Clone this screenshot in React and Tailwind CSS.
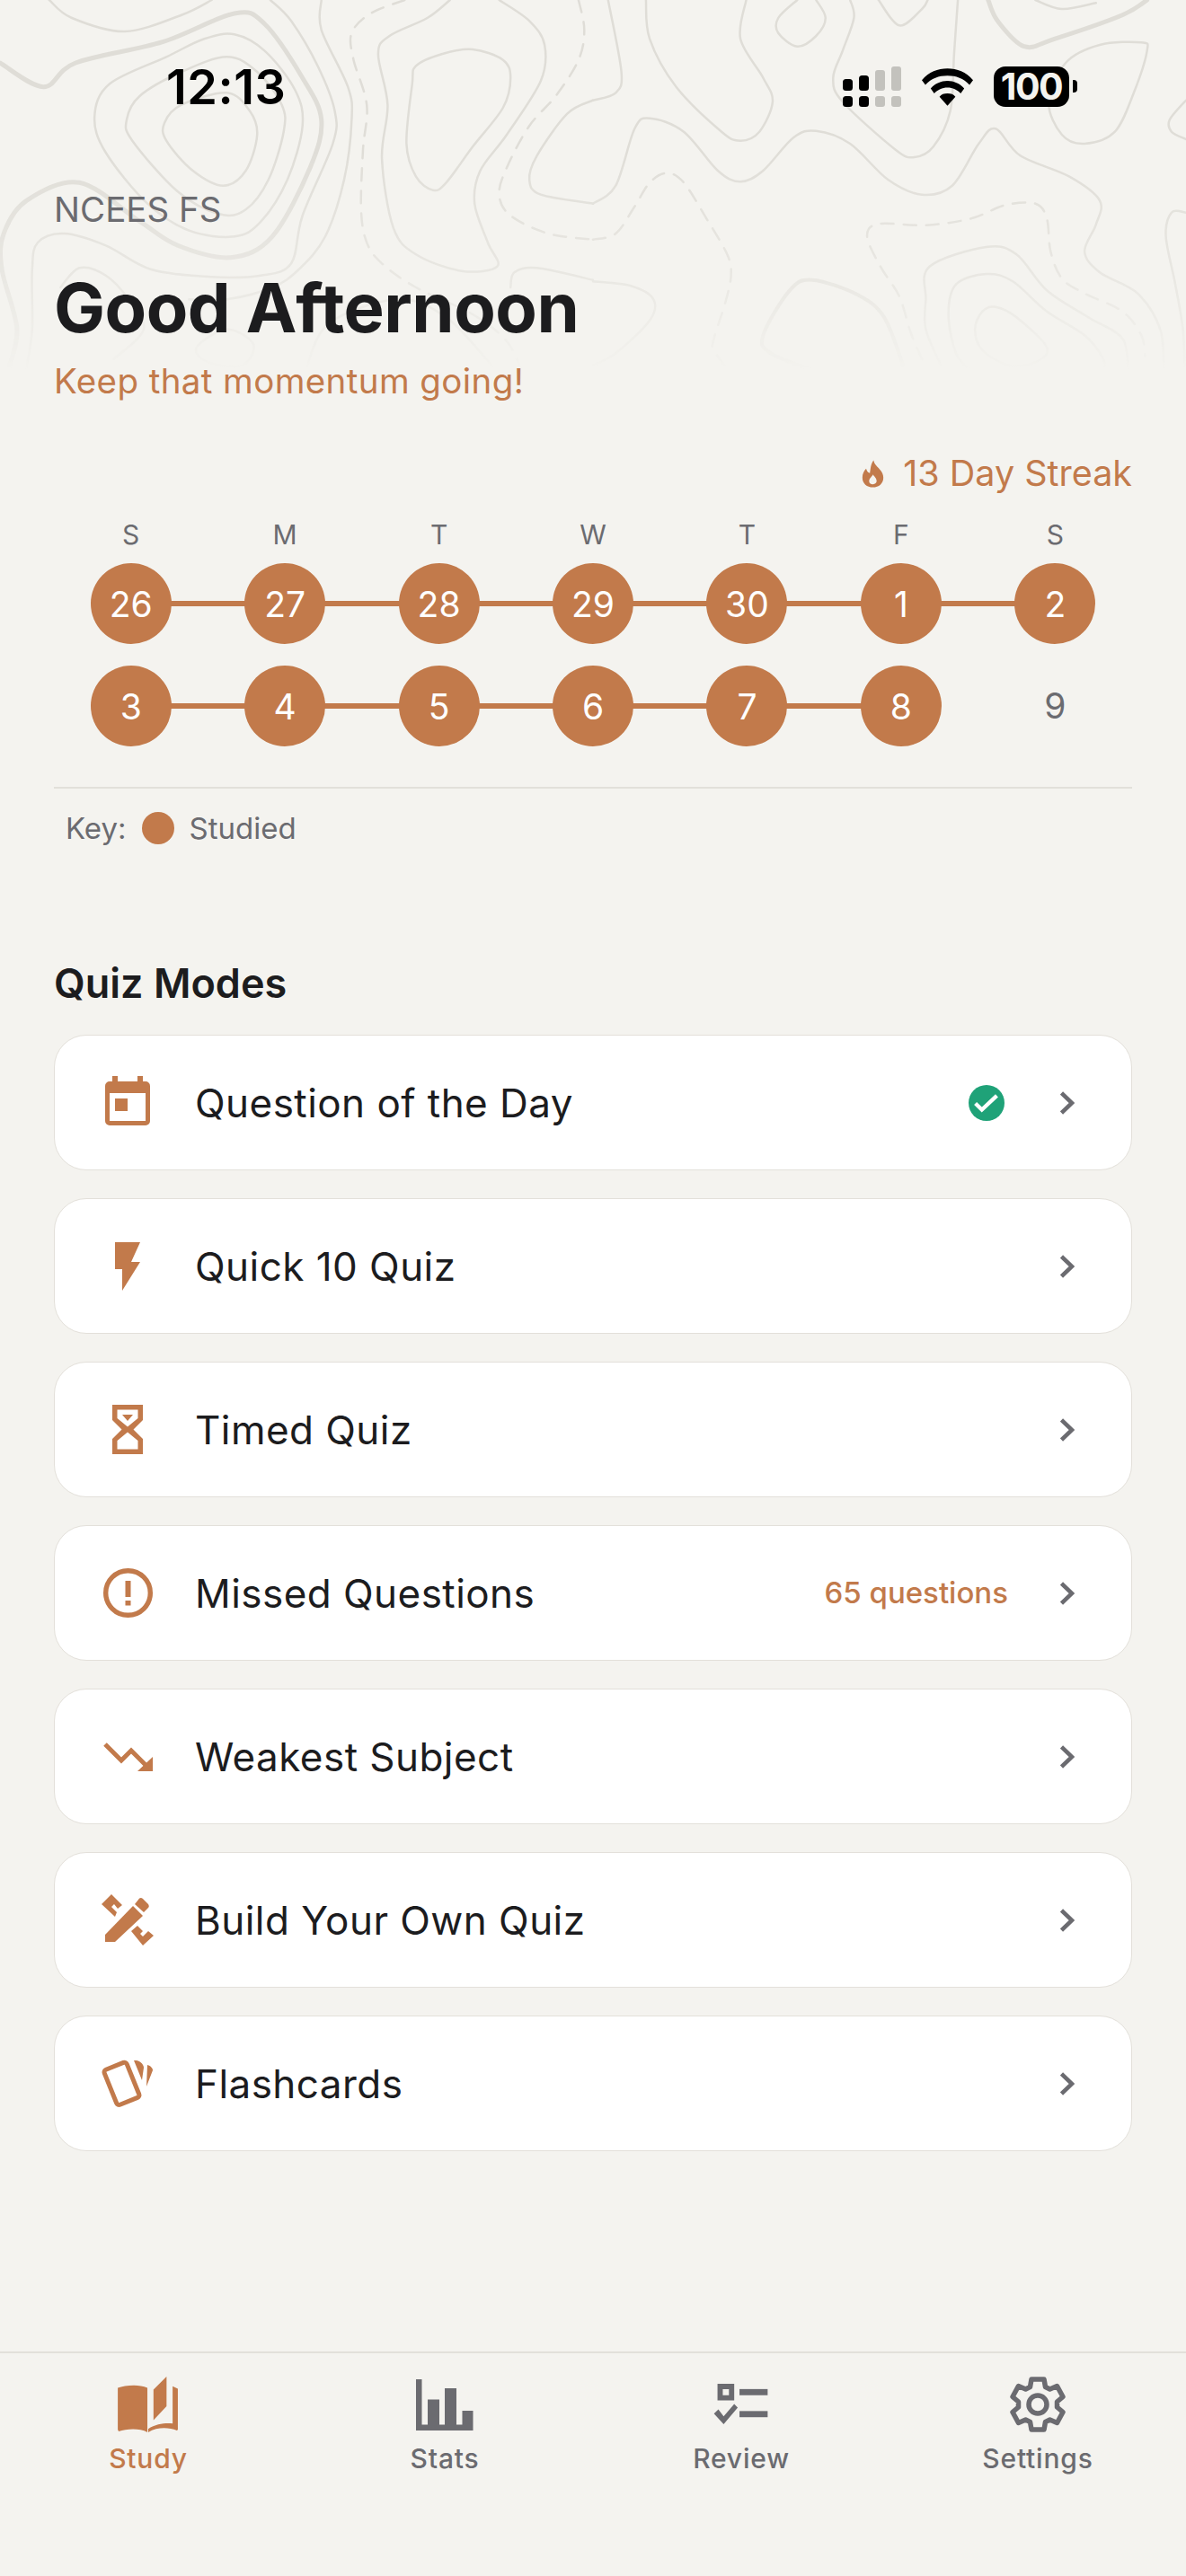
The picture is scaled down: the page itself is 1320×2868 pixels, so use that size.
const ACCENT = "#c27a4b";

function smooth(pts, closed) {
  const n = pts.length;
  const p = (i) => (closed ? pts[(i + n) % n] : pts[Math.max(0, Math.min(n - 1, i))]);
  let d = `M${pts[0][0].toFixed(1)} ${pts[0][1].toFixed(1)}`;
  const end = closed ? n : n - 1;
  for (let i = 0; i < end; i++) {
    const [a, b, c, e] = [p(i - 1), p(i), p(i + 1), p(i + 2)];
    const c1 = [b[0] + (c[0] - a[0]) / 6, b[1] + (c[1] - a[1]) / 6];
    const c2 = [c[0] - (e[0] - b[0]) / 6, c[1] - (e[1] - b[1]) / 6];
    d += `C${c1[0].toFixed(1)} ${c1[1].toFixed(1)} ${c2[0].toFixed(1)} ${c2[1].toFixed(1)} ${c[0].toFixed(1)} ${c[1].toFixed(1)}`;
  }
  return d;
}
const L = (a) => a.map(([x, y]) => [x / 2.376, y / 3]);
const R = (a) => a.map(([x, y]) => [660 + x / 2.376, y / 3]);

const CONTOURS = [
  { p: L([[130,0],[190,60],[330,105],[480,50],[560,0]]) },
  { p: L([[0,210],[115,290],[200,210],[430,140],[620,45],[700,80],[800,260],[850,400],[820,560],[720,790],[610,860],[470,820],[370,740],[210,610],[70,670],[10,780],[5,900],[45,1100],[20,1240]]), w: 5 },
  { p: L([[715,0],[770,70],[840,220],[885,370],[880,480],[800,720],[770,880],[690,920],[560,925],[400,900],[280,820],[170,780],[100,810],[85,900],[85,1100],[70,1230]]) },
  { p: L([[850,0],[850,100],[920,290],[930,400],[910,600],[860,790],[790,900],[720,960],[600,1000],[500,1000]]) },
  { c: 1, p: L([[620,115],[700,170],[780,300],[800,420],[760,600],[690,740],[620,790],[500,770],[390,680],[280,510],[250,390],[290,280],[440,190],[540,130]]) },
  { c: 1, p: L([[600,190],[680,240],[745,350],[750,440],[710,600],[650,700],[580,715],[470,640],[350,470],[335,400],[370,320],[480,240]]) },
  { c: 1, p: L([[600,310],[660,370],[680,450],[650,570],[590,620],[510,570],[440,470],[435,410],[480,350]]) },
  { p: L([[160,960],[210,895],[280,920],[340,1000],[380,1100],[300,1200]]) },
  { c: 1, p: L([[600,1100],[670,1150],[640,1220],[550,1210],[520,1160]]) },
  { p: L([[810,1230],[870,1080],[1050,1000],[1180,1060],[1300,1220]]) },
  { d: 1, p: L([[1070,0],[980,45],[930,110],[935,200],[970,350],[960,500],[955,700],[970,810],[1010,880],[1100,960],[1250,1050],[1340,1140],[1380,1240]]) },
  { p: L([[1190,0],[1130,60],[1030,120],[1000,180],[1025,350],[1010,530],[1040,760],[1100,850],[1220,905],[1315,890],[1290,810],[1255,680],[1270,570],[1340,450],[1430,270],[1440,150],[1400,70],[1320,0]]) },
  { c: 1, p: L([[1250,165],[1330,200],[1350,260],[1330,360],[1250,490],[1180,610],[1145,635],[1100,590],[1075,480],[1090,280],[1100,220],[1170,180]]) },
  { d: 1, p: L([[1530,0],[1545,100],[1530,200],[1470,320],[1400,420],[1340,560],[1320,650],[1350,720],[1450,780],[1568,800]]) },
  { p: L([[1568,335],[1500,380],[1420,520],[1400,600],[1430,650],[1568,680]]) },
  { p: L([[1350,960],[1360,910],[1420,895],[1568,935]]) },
  { d: 1, p: R([[0,800],[60,780],[110,690],[150,610],[195,578],[240,610],[300,730],[355,850],[365,920],[350,1010],[320,1130],[320,1170],[360,1240]]) },
  { p: R([[40,0],[75,240],[60,310],[0,335]]) },
  { p: R([[140,0],[150,130],[220,290],[340,440],[390,470],[440,440],[475,340],[450,260],[390,130],[405,0]]) },
  { p: R([[540,0],[490,60],[490,110],[540,155],[590,120],[615,60],[590,0]]) },
  { p: R([[680,0],[690,60],[660,170],[635,260],[660,340],[800,500],[850,525],[900,490],[945,370],[955,180],[965,0]]) },
  { p: R([[755,0],[810,85],[870,30],[885,0]]) },
  { p: R([[1045,0],[1070,70],[1140,155],[1220,130],[1400,50],[1465,0]]), w: 5 },
  { p: R([[1170,0],[1240,30],[1330,10]]) },
  { c: 1, p: R([[1450,142],[1340,150],[1250,210],[1205,340],[1240,450],[1300,480],[1380,440],[1430,310],[1465,170]]) },
  { p: R([[1568,335],[1525,400],[1530,440],[1568,465]]) },
  { p: R([[0,680],[60,620],[110,430],[150,395],[240,440],[330,570],[390,607],[450,570],[530,460],[590,437],[680,480],[780,600],[870,650],[950,620],[1020,480],[1065,430],[1130,520],[1260,590],[1340,670],[1330,750],[1300,840],[1340,910],[1440,980],[1500,1100],[1510,1240]]) },
  { d: 1, p: R([[870,1200],[840,1110],[810,990],[760,890],[725,790],[755,748],[880,752],[1000,730],[1090,685],[1170,680],[1200,730],[1210,840],[1240,930],[1300,980],[1400,1040],[1450,1120],[1460,1190]]) },
  { p: R([[920,1220],[880,1100],[880,1000],[890,890],[1040,825],[1120,850],[1200,970],[1310,1060],[1400,1130],[1415,1240]]) },
  { p: R([[1000,1240],[960,1180],[940,1050],[960,950],[1040,915],[1110,940],[1200,1040],[1300,1120],[1350,1200],[1350,1240]]) },
  { c: 1, p: R([[1065,1025],[1120,1060],[1200,1160],[1170,1210],[1100,1220],[1030,1170],[1010,1100],[1030,1040]]) },
  { p: R([[590,1240],[470,1180],[450,1120],[520,970],[580,935],[700,985],[770,1060],[820,1220]]), w: 4 },
  { p: R([[0,940],[100,955],[160,1000],[150,1070],[60,1180],[0,1220]]) },
  { p: R([[1568,710],[1530,710],[1515,790],[1540,950],[1560,1100],[1565,1240]]) },
];

function Topo() {
  return (
    <svg className="absolute left-0 top-0 w-[1320px] h-[420px]" viewBox="0 0 1320 420" fill="none">
      <defs>
        <linearGradient id="fade" x1="0" y1="0" x2="0" y2="1">
          <stop offset="0" stopColor="#fff" />
          <stop offset="0.4" stopColor="#fff" />
          <stop offset="0.72" stopColor="#fff" stopOpacity="0.55" />
          <stop offset="0.98" stopColor="#fff" stopOpacity="0" />
        </linearGradient>
        <mask id="topomask">
          <rect width="1320" height="420" fill="url(#fade)" />
        </mask>
      </defs>
      <g mask="url(#topomask)" stroke="#dfddd7" strokeLinecap="round">
        {CONTOURS.map((c, i) => (
          <path
            key={i}
            d={smooth(c.p, c.c) + (c.c ? "Z" : "")}
            strokeWidth={c.w || 2.5}
            strokeDasharray={c.d ? "14 11" : undefined}
          />
        ))}
      </g>
    </svg>
  );
}

function StatusBar() {
  return (
    <div className="relative flex items-center justify-between h-[45px] pl-[185px] pr-[130px] mt-[74px]">
      <span className="text-[54px] leading-[45px] font-semibold text-black tracking-[0.5px]">12:13</span>
      <div className="flex items-center">
        <svg width="65" height="45" viewBox="0 0 65 45" className="mr-[23px]">
          <g fill="#000">
            <rect x="0" y="14" width="11" height="13" rx="3.500" />
            <rect x="18" y="10" width="11" height="17" rx="3.500" />
            <rect x="0" y="33" width="11" height="12" rx="3.500" />
            <rect x="18" y="33" width="11" height="12" rx="3.500" />
          </g>
          <g fill="#c3c2bd">
            <rect x="36" y="4" width="11" height="23" rx="3" />
            <rect x="54" y="0" width="11" height="27" rx="3" />
            <rect x="36" y="33" width="11" height="12" rx="3" />
            <rect x="54" y="33" width="11" height="12" rx="3" />
          </g>
        </svg>
        <svg width="57" height="42" viewBox="0 0 58 42" className="mr-[23px]">
          <path fill="#000" d="M29 0C18 0 8 4 0 13l4 5.500C11 11 19 8 29 8s18 3 25 10.500l4-5.500C50 4 40 0 29 0Z" />
          <path fill="#000" d="M29 14c-7 0-14 3-19 8.500l4 5.500c4-4 9-6.500 15-6.500S40 24 44 28l4-5.500C43 17 36 14 29 14Z" />
          <path fill="#000" d="M29 28c-4 0-7 1-9 4l9 10 9-10c-2-3-5-4-9-4Z" />
        </svg>
        <div className="relative flex items-center justify-center w-[84px] h-[45px] rounded-[13px] bg-black">
          <span className="text-[41px] leading-[45px] font-bold text-[#f4f3ef] tracking-[-1.5px]">100</span>
          <span className="absolute right-[-9px] top-[15px] w-[5px] h-[14px] rounded-r-[4px] bg-black" />
        </div>
      </div>
    </div>
  );
}

const ROW1 = ["26", "27", "28", "29", "30", "1", "2"];
const ROW2 = ["3", "4", "5", "6", "7", "8"];
const DAYS = ["S", "M", "T", "W", "T", "F", "S"];

function DayRow({ days, className }) {
  return (
    <div className={"grid grid-cols-7 " + className}>
      {days.map((d, i) => (
        <div key={i} className="relative flex justify-center">
          {i < days.length - 1 && (
            <span className="absolute left-[50%] w-full top-[42px] h-[6px] bg-[#c27a4b]" />
          )}
          <span className="relative flex items-center justify-center w-[90px] h-[90px] rounded-full bg-[#c27a4b] text-white text-[39px] leading-none font-normal">
            {d}
          </span>
        </div>
      ))}
      {days.length < 7 && (
        <div className="flex items-center justify-center h-[90px] text-[39px] text-[#6b6b70]">9</div>
      )}
    </div>
  );
}

function Card({ icon, label, right }) {
  return (
    <div className="flex items-center h-[151px] rounded-[36px] bg-white border border-[#e3e0da] pl-[52px] pr-[63px]">
      <span className="flex items-center justify-center w-[58px] h-[58px] mr-[46px] shrink-0">{icon}</span>
      <span className="flex-1 text-[44px] leading-none text-[#1c1c1e] tracking-[0.45px]">{label}</span>
      {right}
      <svg width="16" height="26" viewBox="0 0 16 26" className="ml-[58px]" fill="none">
        <path d="M1.500 2 13 13 1.500 24" stroke="#6b6b70" strokeWidth="4.500" />
      </svg>
    </div>
  );
}

const iconFill = ACCENT;
const ICONS = {
  calendar: (
    <svg width="50" height="55" viewBox="0 0 50 55" fill={iconFill} className="mt-[-5px]">
      <path fillRule="evenodd" d="M8 0h6v6h22V0h6v6h3a5 5 0 0 1 5 5v39a5 5 0 0 1-5 5H5a5 5 0 0 1-5-5V11a5 5 0 0 1 5-5h3V0ZM5 19v31h40V19H5Z" />
      <rect x="11" y="25" width="14" height="14" />
    </svg>
  ),
  bolt: (
    <svg width="28" height="54" viewBox="0 0 28 54" fill={iconFill}>
      <path d="M0 0h28L18 22h10L8 54V30H0V0Z" />
    </svg>
  ),
  hourglass: (
    <svg width="34" height="55" viewBox="0 0 34 55" fill={iconFill}>
      <path fillRule="evenodd" d="M0 0H34V17L23.500 27.500 34 38V55H0V38L10.500 27.500 0 17ZM5.500 5.500V15L17 24.500 28.500 15V5.500ZM5.500 40V49.500H28.500V40L17 30.500Z" />
      <path d="M11 11H23L17 18Z" />
    </svg>
  ),
  alert: (
    <svg width="55" height="55" viewBox="0 0 55 55" fill="none">
      <circle cx="27.500" cy="27.500" r="24.800" stroke={iconFill} strokeWidth="5.400" />
      <rect x="24.500" y="14" width="6" height="18" fill={iconFill} />
      <rect x="24.500" y="36" width="6" height="5.500" fill={iconFill} />
    </svg>
  ),
  trend: (
    <svg width="55" height="33" viewBox="0 0 55 33" fill="none">
      <path d="M2 3 20 21 31 10 47 26" stroke={iconFill} strokeWidth="5" />
      <path d="M38 33h17V17Z" fill={iconFill} />
    </svg>
  ),
  tools: (
    <svg width="58" height="58" viewBox="0 0 58 58" fill={iconFill}>
      <path d="M0 11 11 0 23 12 18 16 14 11 11 14 17 20 15 25ZM33 41 40 35 46 41 43 44 46 47 50 43 52 41 58 46 46 57Z" />
      <path d="M4 45 35 13 46 24 15 53H4Z" />
      <path d="M37 11 41 6C42 4 44 3 46 5L52 11C53 13 53 14 52 15L47 20Z" />
    </svg>
  ),
  cards: (
    <svg width="58" height="54" viewBox="0 0 58 54" fill="none">
      <rect x="9" y="6" width="27" height="42" rx="3" transform="rotate(-22 22 27)" stroke={iconFill} strokeWidth="5" />
      <path d="M36 1h3c5 1 8 5 8 8l-2 14L36 1ZM51 6c4 1 6 4 6 6l-7 18 1-24Z" fill={iconFill} />
    </svg>
  ),
};

const check = (
  <svg width="40" height="40" viewBox="0 0 42 42" className="mr-[4px]">
    <circle cx="21" cy="21" r="21" fill="#1fa278" />
    <path d="M8 21.500l7.500 7.500L33 12.500" stroke="#fff" strokeWidth="4.500" fill="none" />
  </svg>
);

const TABS = [
  {
    label: "Study",
    color: "text-[#c27a4b]",
    icon: (
      <svg width="70" height="62" viewBox="0 0 70 64" fill={ACCENT}>
        <path d="M0 15c8-3 24-5 34 0v51c-9-5-24-4-33-1L0 63V15Z" transform="translate(0 -2)" />
        <path d="M41 15 56 0v34L41 50V15Z" />
        <path d="M63 11l6 3v47l-1 1c-10-4-23-4-33 2v-4c9-6 21-7 28-6V11Z" />
      </svg>
    ),
  },
  {
    label: "Stats",
    color: "text-[#6b6b70]",
    icon: (
      <svg width="64" height="57" viewBox="0 0 64 57" fill="#6b6b70">
        <path d="M0 0h6.500v50.600H13V22.600h13v28H32V10h13v40.600h6.500V35H63.500v22H0Z" />
      </svg>
    ),
  },
  {
    label: "Review",
    color: "text-[#6b6b70]",
    icon: (
      <svg width="62" height="47" viewBox="0 0 62 48" fill="#6b6b70">
        <path fillRule="evenodd" d="M4 0h19v19H4V0Zm6 6v7h7V6h-7Z" />
        <rect x="29" y="6" width="32" height="7" />
        <rect x="29" y="31" width="32" height="7" />
        <path d="M0 34l5-5 6 8 12-14 4 4-16 19L0 34Z" />
      </svg>
    ),
  },
  {
    label: "Settings",
    color: "text-[#6b6b70]",
    icon: (
      <svg width="62" height="62" viewBox="0 0 62 62" fill="none" stroke="#6b6b70" strokeWidth="5.500" strokeLinejoin="round">
        <path d="M24 3h14l1.500 8.500 5 2.500 8-3.500 6.500 12-6.500 5.500v6l6.500 5.500-6.500 12-8-3.500-5 2.500L38 59H24l-1.500-8.500-5-2.500-8 3.500-6.500-12L9.500 34v-6L3 22.500l6.500-12 8 3.500 5-2.500L24 3Z" />
        <circle cx="31" cy="31" r="10" />
      </svg>
    ),
  },
];

export default function App() {
  return (
    <div className="relative w-[1320px] h-[2868px] overflow-hidden bg-[#f4f3ef] text-[#1c1c1e] flex flex-col [font-family:Inter,sans-serif]">
      <Topo />
      <StatusBar />
      <div className="relative flex flex-col px-[60px] flex-1">
        <div className="mt-[91px] text-[38.500px] leading-[46px] text-[#6b6b70]">NCEES FS</div>
        <h1 className="mt-[40px] text-[76px] leading-[92px] font-bold text-[#1c1c1e] tracking-[-0.5px]">Good Afternoon</h1>
        <div className="mt-[13px] text-[38.500px] leading-[46px] text-[#c27a4b] tracking-[0.4px]">Keep that momentum going!</div>

        <div className="mt-[56px] flex items-center justify-end text-[39.500px] leading-[48px] text-[#c27a4b]">
          <svg width="25" height="31" viewBox="0 0 30 36" className="mr-[21px]" fill={ACCENT}>
            <path fillRule="evenodd" d="M16 0c1 6 5 8 8 12 3 3 5 7 5 11 0 8-6 13-14 13S1 31 1 23c0-5 2-9 5-12 1 3 2 5 5 6 1-6 1-12 5-17Zm-1 19c-1 3-5 5-5 9 0 3 2 4 5 4s5-2 5-4c0-4-3-6-5-9Z" />
          </svg>
          13 Day Streak
        </div>

        <div className="mt-[26px] grid grid-cols-7 text-[30px] leading-[36px] text-[#6b6b70]">
          {DAYS.map((d, i) => (
            <div key={i} className="text-center">{d}</div>
          ))}
        </div>
        <DayRow days={ROW1} className="mt-[14px]" />
        <DayRow days={ROW2} className="mt-[24px]" />

        <div className="mt-[45px] h-[2px] bg-[#e2e0da]" />
        <div className="mt-[26px] flex items-center pl-[13px] text-[33px] leading-[36px] text-[#6b6b70]">
          Key:
          <span className="w-[36px] h-[36px] rounded-full bg-[#c27a4b] ml-[17px] mr-[17px]" />
          Studied
        </div>

        <h2 className="mt-[128px] text-[45px] leading-[54px] font-semibold text-[#1c1c1e]">Quiz Modes</h2>

        <div className="mt-[30px] flex flex-col gap-[31px]">
          <Card icon={ICONS.calendar} label="Question of the Day" right={check} />
          <Card icon={ICONS.bolt} label="Quick 10 Quiz" />
          <Card icon={ICONS.hourglass} label="Timed Quiz" />
          <Card
            icon={ICONS.alert}
            label="Missed Questions"
            right={<span className="text-[33px] leading-none font-medium text-[#c27a4b]">65 questions</span>}
          />
          <Card icon={ICONS.trend} label="Weakest Subject" />
          <Card icon={ICONS.tools} label="Build Your Own Quiz" />
          <Card icon={ICONS.cards} label="Flashcards" />
        </div>
      </div>

      <div className="relative h-[250px] border-t-2 border-[#e2e0da] grid grid-cols-4">
        {TABS.map((t) => (
          <div key={t.label} className={"flex flex-col items-center pt-[25px] " + t.color}>
            <span className="flex items-center justify-center h-[64px]">{t.icon}</span>
            <span className="mt-[8px] text-[30px] leading-[40px] font-medium tracking-[0.8px]">{t.label}</span>
          </div>
        ))}
      </div>
    </div>
  );
}
